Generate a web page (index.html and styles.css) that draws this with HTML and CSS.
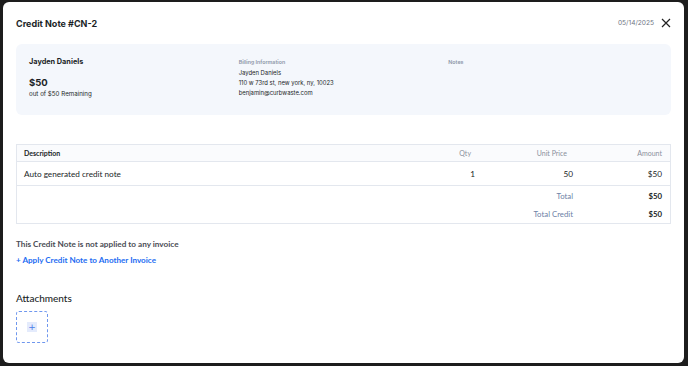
FILE: index.html
```html
<!DOCTYPE html>
<html lang="en">
<head>
    <meta charset="UTF-8">
    <meta name="viewport" content="width=device-width, initial-scale=1.0">
    <title>Credit Note #CN-2</title>
    <link rel="stylesheet" href="styles.css">
</head>
<body>
    <section class="panel">
        <header class="top">
            <h1>Credit Note #CN-2</h1>
            <div class="top-right">
                <span class="date">05/14/2025</span>
                <svg class="close" width="10" height="10" viewBox="0 0 10 10">
                    <path d="M1 1 L9 9 M9 1 L1 9" stroke="#222" stroke-width="1.2" fill="none"/>
                </svg>
            </div>
        </header>

        <div class="summary">
            <div class="col">
                <div class="customer">Jayden Daniels</div>
                <div class="amount">$50</div>
                <div class="remaining">out of $50 Remaining</div>
            </div>
            <div class="col">
                <div class="label">Billing Information</div>
                <div class="info">Jayden Daniels</div>
                <div class="info">110 w 73rd st, new york, ny, 10023</div>
                <div class="info">benjamin@curbwaste.com</div>
            </div>
            <div class="col">
                <div class="label">Notes</div>
            </div>
        </div>

        <div class="items">
            <div class="row head">
                <div>Description</div>
                <div class="num muted qty-head">Qty</div>
                <div class="num muted price-head">Unit Price</div>
                <div class="num muted">Amount</div>
            </div>
            <div class="row line">
                <div>Auto generated credit note</div>
                <div class="num">1</div>
                <div class="num">50</div>
                <div class="num">$50</div>
            </div>
            <div class="row total first">
                <div></div>
                <div></div>
                <div class="num total-label">Total</div>
                <div class="num strong">$50</div>
            </div>
            <div class="row total">
                <div></div>
                <div></div>
                <div class="num total-label">Total Credit</div>
                <div class="num strong">$50</div>
            </div>
        </div>

        <p class="not-applied">This Credit Note is not applied to any invoice</p>
        <a href="#" class="apply">+ Apply Credit Note to Another Invoice</a>

        <h2>Attachments</h2>
        <div class="upload">
            <span class="plus">+</span>
        </div>
    </section>
</body>
</html>
```

FILE: styles.css
```css
*{
    box-sizing: border-box;
}

body{
    margin: 0;
    background-color: #1d1d1d;
    font-family: Inter, "Liberation Sans", sans-serif;
    color: #1b1f27;
}

.panel{
    background-color: #ffffff;
    margin: 2px 4px 0 3px;
    height: 361px;
    border-radius: 6px;
    padding: 12px 13px 0 13px;
}

.top{
    display: flex;
    justify-content: space-between;
    align-items: center;
    height: 18px;
}

h1{
    margin: 0;
    font-size: 9px;
    font-weight: 700;
}

.top-right{
    display: flex;
    align-items: center;
    gap: 7px;
}

.date{
    font-size: 6.6px;
    color: #707684;
}

.summary{
    margin-top: 12px;
    background-color: #f4f7fc;
    border-radius: 6px;
    height: 71px;
    padding: 12px 13px;
    display: grid;
    grid-template-columns: repeat(3, 1fr);
}

.customer{
    font-size: 7.3px;
    font-weight: 700;
    line-height: 11px;
}

.amount{
    font-size: 9.5px;
    font-weight: 700;
    margin-top: 10px;
    line-height: 12px;
}

.remaining{
    font-size: 6.2px;
    line-height: 9px;
}

.label{
    font-size: 5.3px;
    font-weight: 600;
    color: #8c96a8;
    line-height: 12px;
}

.info{
    font-size: 5.9px;
    line-height: 10px;
}

.items{
    margin-top: 29px;
    border: 1px solid #e3e7ee;
    font-family: Lato, "Noto Sans", sans-serif;
}

.row{
    display: grid;
    grid-template-columns: 1fr 60px 98px 89px;
    align-items: center;
    padding: 0 8px 0 7px;
}

.head{
    height: 17px;
    font-size: 7px;
    font-weight: 700;
    background-color: #fafbfd;
    border-bottom: 1px solid #e3e7ee;
}

.muted{
    color: #8a909c;
    font-weight: 400;
}

.qty-head{
    padding-right: 4px;
}

.price-head{
    padding-right: 6px;
}

.line{
    height: 24px;
    font-size: 8.2px;
    border-bottom: 1px solid #e3e7ee;
}

.num{
    text-align: right;
}

.total{
    height: 18px;
    font-size: 7.8px;
}

.total.first{
    height: 19px;
}

.total-label{
    color: #6d7fa6;
}

.strong{
    font-weight: 700;
}

.not-applied{
    margin: 15px 0 0 0;
    font-family: Lato, "Noto Sans", sans-serif;
    font-size: 8.2px;
    font-weight: 700;
    color: #4a4d55;
    line-height: 10px;
}

.apply{
    display: block;
    margin-top: 6px;
    font-family: Lato, "Noto Sans", sans-serif;
    font-size: 8.1px;
    font-weight: 700;
    color: #1d6cf2;
    text-decoration: none;
    line-height: 10px;
}

h2{
    margin: 26px 0 0 0;
    font-family: Lato, "Noto Sans", sans-serif;
    font-size: 10px;
    font-weight: 500;
    line-height: 14px;
}

.upload{
    margin-top: 6px;
    width: 32px;
    height: 32px;
    border: 1px dashed #6f97ee;
    border-radius: 3px;
    display: flex;
    justify-content: center;
    align-items: center;
}

.plus{
    width: 10px;
    height: 10px;
    background-color: #e4ebfc;
    color: #4d7ce8;
    font-family: "DejaVu Sans", sans-serif;
    font-size: 9px;
    line-height: 10px;
    text-align: center;
}
```
